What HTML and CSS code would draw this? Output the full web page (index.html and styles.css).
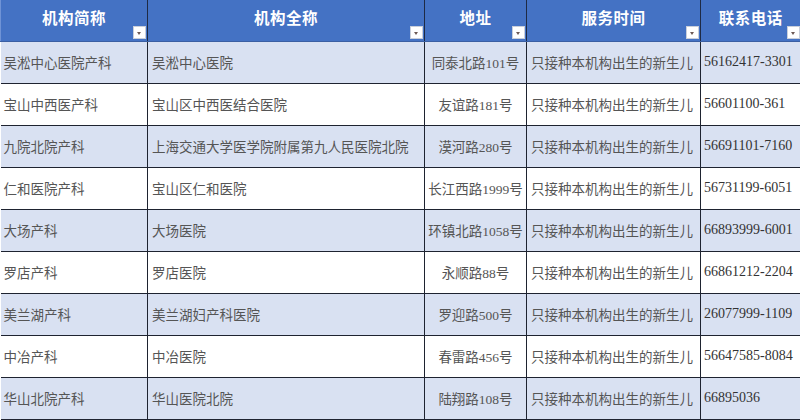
FILE: index.html
```html
<!DOCTYPE html>
<html lang="zh-CN">
<head>
<meta charset="utf-8">
<link rel="stylesheet" href="styles.css">
</head>
<body>
<table class="grid">
  <colgroup>
    <col class="c1"><col class="c2"><col class="c3"><col class="c4"><col class="c5">
  </colgroup>
  <thead>
    <tr>
      <th>机构简称<span class="filter"></span></th>
      <th>机构全称<span class="filter"></span></th>
      <th>地址<span class="filter"></span></th>
      <th>服务时间<span class="filter"></span></th>
      <th>联系电话<span class="filter"></span></th>
    </tr>
  </thead>
  <tbody>
    <tr class="alt"><td>吴淞中心医院产科</td><td>吴淞中心医院</td><td class="addr">同泰北路101号</td><td>只接种本机构出生的新生儿</td><td class="tel">56162417-3301</td></tr>
    <tr><td>宝山中西医产科</td><td>宝山区中西医结合医院</td><td class="addr">友谊路181号</td><td>只接种本机构出生的新生儿</td><td class="tel">56601100-361</td></tr>
    <tr class="alt"><td>九院北院产科</td><td>上海交通大学医学院附属第九人民医院北院</td><td class="addr">漠河路280号</td><td>只接种本机构出生的新生儿</td><td class="tel">56691101-7160</td></tr>
    <tr><td>仁和医院产科</td><td>宝山区仁和医院</td><td class="addr">长江西路1999号</td><td>只接种本机构出生的新生儿</td><td class="tel">56731199-6051</td></tr>
    <tr class="alt"><td>大场产科</td><td>大场医院</td><td class="addr">环镇北路1058号</td><td>只接种本机构出生的新生儿</td><td class="tel">66893999-6001</td></tr>
    <tr><td>罗店产科</td><td>罗店医院</td><td class="addr">永顺路88号</td><td>只接种本机构出生的新生儿</td><td class="tel">66861212-2204</td></tr>
    <tr class="alt"><td>美兰湖产科</td><td>美兰湖妇产科医院</td><td class="addr">罗迎路500号</td><td>只接种本机构出生的新生儿</td><td class="tel">26077999-1109</td></tr>
    <tr><td>中冶产科</td><td>中冶医院</td><td class="addr">春雷路456号</td><td>只接种本机构出生的新生儿</td><td class="tel">56647585-8084</td></tr>
    <tr class="alt"><td>华山北院产科</td><td>华山医院北院</td><td class="addr">陆翔路108号</td><td>只接种本机构出生的新生儿</td><td class="tel">66895036</td></tr>
  </tbody>
</table>
</body>
</html>
```

FILE: styles.css
```css
html, body {
  margin: 0;
  padding: 0;
  background: #ffffff;
}

.grid {
  width: 800px;
  border-collapse: collapse;
  table-layout: fixed;
  font-family: "Liberation Serif", "Noto Sans CJK SC", serif;
}

.c1 { width: 147px; }
.c2 { width: 277px; }
.c3 { width: 102px; }
.c4 { width: 174px; }
.c5 { width: 100px; }

.grid th {
  position: relative;
  height: 41px;
  padding: 0 0 6px 0;
  background: #4472c4;
  color: #ffffff;
  font-family: "Noto Sans CJK SC", sans-serif;
  font-size: 15.5px;
  font-weight: 700;
  letter-spacing: 0.5px;
  text-align: center;
  vertical-align: middle;
  border-left: 1px solid #1e2a44;
  border-right: 1px solid #1e2a44;
  border-bottom: 1px solid #3b5fa3;
  box-sizing: border-box;
}

.grid th:first-child { border-left: 1px solid #6f93d6; }
.grid th:last-child { border-right: none; }

.filter {
  position: absolute;
  right: 1px;
  bottom: 2px;
  width: 13px;
  height: 13px;
  background: #ffffff;
  border: 1px solid #c9cfdb;
  box-sizing: border-box;
}

.filter::after {
  content: "";
  position: absolute;
  left: 3px;
  top: 5px;
  border-left: 2.5px solid transparent;
  border-right: 2.5px solid transparent;
  border-top: 3px solid #6d5a55;
}

.grid td {
  height: 41px;
  padding: 0 4px;
  font-size: 13.5px;
  color: #555555;
  vertical-align: middle;
  white-space: nowrap;
  overflow: hidden;
  border-left: 1px solid #1e2330;
  border-right: 1px solid #1e2330;
  border-bottom: 1px solid #1e2330;
}

.grid td:first-child { border-left: none; padding-left: 3px; }
.grid td:last-child { border-right: none; }

.grid tr.alt td { background: #d9e1f2; }

.grid td.addr { text-align: center; padding: 0 1px; }

.grid td.tel {
  color: #333333;
  font-size: 14px;
  padding-left: 3px;
}
```
